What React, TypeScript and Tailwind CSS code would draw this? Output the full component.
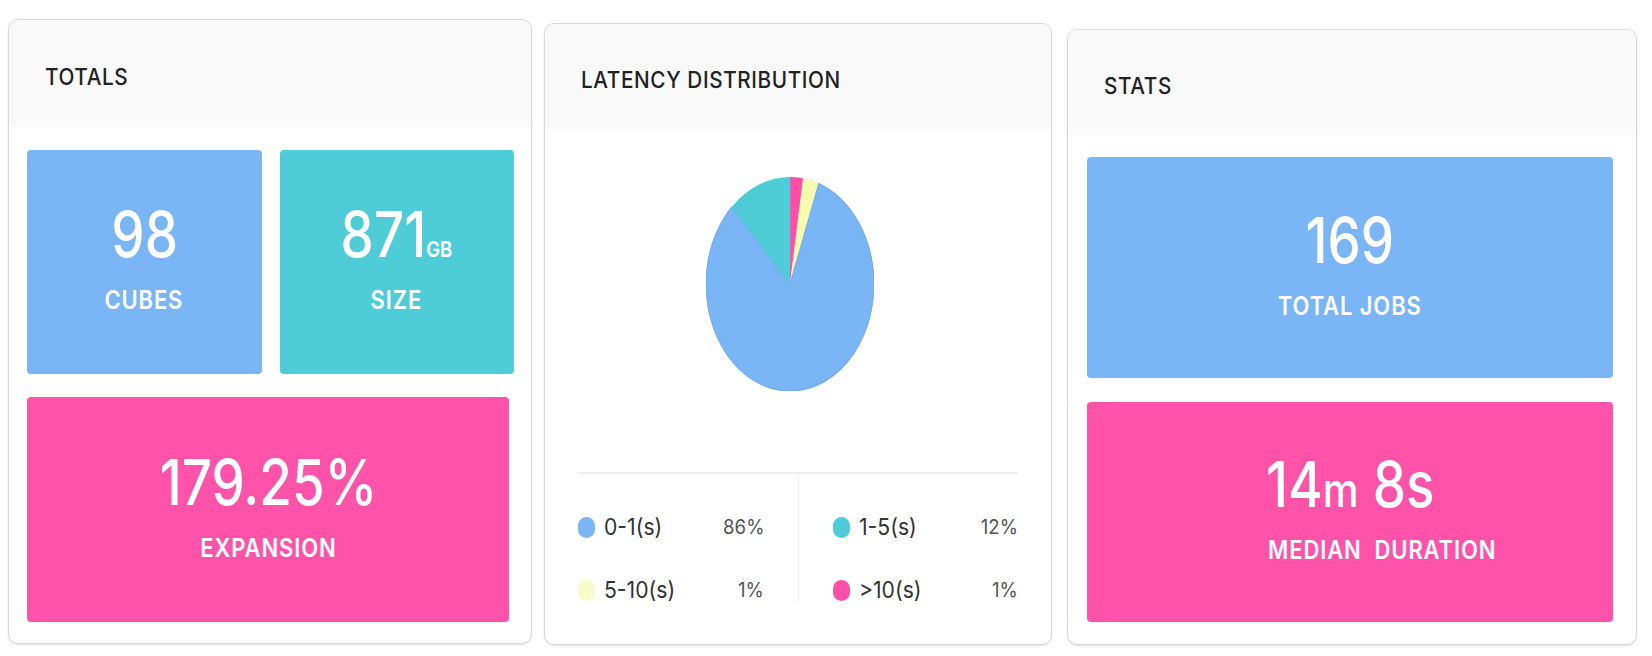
import type { ReactNode } from "react";

const font = { fontFamily: "Inter, 'Noto Sans', sans-serif" };

function CardHeader({ title, className = "" }: { title: string; className?: string }) {
  return (
    <div className={`flex items-center bg-[#f9f9f9] pl-9 pt-2 ${className}`}>
      <span className="inline-block origin-left scale-x-[0.9] text-[23px] font-medium tracking-[0.03em] text-[#222]">
        {title}
      </span>
    </div>
  );
}

function StatBox({
  value,
  label,
  className = "",
  labelClass = "",
}: {
  value: ReactNode;
  label: string;
  className?: string;
  labelClass?: string;
}) {
  return (
    <div className={`flex flex-col items-center justify-center rounded-[4px] pb-2 text-white ${className}`}>
      <div className="scale-x-[0.84] text-[63px] font-medium leading-none">{value}</div>
      <div
        className={`mt-[22px] scale-x-[0.88] whitespace-pre text-[25px] font-semibold leading-none tracking-[0.04em] ${labelClass}`}
      >
        {label}
      </div>
    </div>
  );
}

function LegendRow({ color, label, pct }: { color: string; label: string; pct: string }) {
  return (
    <div className="flex h-[26px] items-center">
      <span className={`h-[21px] w-[17px] shrink-0 rounded-full ${color}`} />
      <span className="ml-[9px] inline-block origin-left scale-x-[0.92] text-[23px] text-[#333]">{label}</span>
      <span className="ml-auto inline-block origin-right scale-x-[0.93] text-[20px] text-[#555]">{pct}</span>
    </div>
  );
}

function Pie() {
  return (
    <svg width="168" height="214" viewBox="-100 -100 200 200" preserveAspectRatio="none">
      <path d="M0 0 L0 -100 A100 100 0 0 1 15.64 -98.77 Z" fill="#ff4fa8" />
      <path d="M0 0 L15.64 -98.77 A100 100 0 0 1 34.2 -93.97 Z" fill="#f6fbae" />
      <path d="M0 0 L34.2 -93.97 A100 100 0 1 1 -69.47 -71.93 Z" fill="#7ab5f6" stroke="#6aa9f2" strokeWidth="1" />
      <path d="M0 0 L-69.47 -71.93 A100 100 0 0 1 0 -100 Z" fill="#4ecdd9" />
    </svg>
  );
}

export default function App() {
  return (
    <div className="flex h-[656px] w-[1652px] items-start bg-white pl-[8px]" style={font}>
      {/* totals */}
      <section className="mt-[19px] flex h-[625px] w-[524px] flex-col overflow-hidden rounded-[10px] border border-[#dadada] bg-white shadow-[0_1px_2px_rgba(0,0,0,0.12)]">
        <CardHeader title="TOTALS" className="h-[107px]" />
        <div className="flex flex-1 flex-col gap-[23px] pb-[21px] pl-[18px] pr-[17px] pt-[23px]">
          <div className="grid h-[224px] grid-cols-2 gap-[18px]">
            <StatBox value="98" label="CUBES" className="bg-[#7ab5f6]" />
            <StatBox
              value={
                <span>
                  871<span className="text-[22px] font-semibold">GB</span>
                </span>
              }
              label="SIZE"
              className="bg-[#4ecdd9]"
            />
          </div>
          <StatBox value="179.25%" label="EXPANSION" className="mr-[5px] flex-1 bg-[#ff52a9]" />
        </div>
      </section>

      {/* latency */}
      <section className="ml-[12px] mt-[23px] flex h-[622px] w-[508px] flex-col overflow-hidden rounded-[10px] border border-[#dadada] bg-white shadow-[0_1px_2px_rgba(0,0,0,0.12)]">
        <CardHeader title="LATENCY DISTRIBUTION" className="h-[105px]" />
        <div className="flex justify-center pr-[16px] pt-[48px]">
          <Pie />
        </div>
        <div className="mx-[33px] mt-[81px] h-[2px] bg-[#efefef]" />
        <div className="mx-[33px] grid grid-cols-2">
          <div className="flex flex-col gap-[37px] pr-[34px] pt-[40px]">
            <LegendRow color="bg-[#7ab5f6]" label="0-1(s)" pct="86%" />
            <LegendRow color="bg-[#f6fbc8]" label="5-10(s)" pct="1%" />
          </div>
          <div className="flex h-[129px] flex-col gap-[37px] border-l border-[#eeeeee] pl-[34px] pt-[40px]">
            <LegendRow color="bg-[#4ecdd9]" label="1-5(s)" pct="12%" />
            <LegendRow color="bg-[#ff4fa8]" label=">10(s)" pct="1%" />
          </div>
        </div>
      </section>

      {/* stats */}
      <section className="ml-[15px] mt-[29px] flex h-[616px] w-[570px] flex-col overflow-hidden rounded-[10px] border border-[#dadada] bg-white shadow-[0_1px_2px_rgba(0,0,0,0.12)]">
        <CardHeader title="STATS" className="h-[105px]" />
        <div className="flex flex-1 flex-col gap-[24px] pb-[22px] pl-[19px] pr-[23px] pt-[22px]">
          <StatBox value="169" label="TOTAL JOBS" className="h-[221px] bg-[#7ab5f6]" />
          <StatBox
            value={
              <span>
                14<span className="text-[48px]">m</span> 8s
              </span>
            }
            label="MEDIAN  DURATION"
            labelClass="pl-[74px]"
            className="flex-1 bg-[#ff52a9]"
          />
        </div>
      </section>
    </div>
  );
}
